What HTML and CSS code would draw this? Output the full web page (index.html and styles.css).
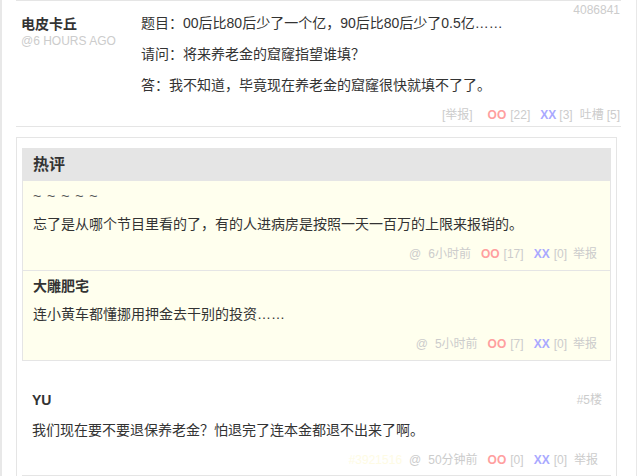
FILE: index.html
```html
<!DOCTYPE html>
<html lang="zh-CN">
<head>
<meta charset="utf-8">
<title>评论</title>
<link rel="stylesheet" href="styles.css">
</head>
<body>
<div class="page">
  <div class="main-comment">
    <span class="cid">4086841</span>
    <div class="author">
      <strong class="name">电皮卡丘</strong>
      <small class="ago">@6 HOURS AGO</small>
    </div>
    <div class="body">
      <p>题目：00后比80后少了一个亿，90后比80后少了0.5亿……</p>
      <p>请问：将来养老金的窟窿指望谁填？</p>
      <p>答：我不知道，毕竟现在养老金的窟窿很快就填不了了。</p>
      <div class="vote main-vote">
        <span>[举报]</span><span class="oo g15">OO</span><span class="g4">[22]</span><span class="xx g10">XX</span><span class="g3">[3]</span><span class="g7">吐槽</span><span class="g3">[5]</span>
      </div>
    </div>
  </div>

  <div class="comments">
    <div class="hot-title">热评</div>
    <ul class="hot-list">
      <li class="item">
        <div class="item-name tilde">~ ~ ~ ~ ~</div>
        <p class="item-text">忘了是从哪个节目里看的了，有的人进病房是按照一天一百万的上限来报销的。</p>
        <div class="vote">
          <span>@</span><span class="g7">6小时前</span><span class="oo g10">OO</span><span class="g4">[17]</span><span class="xx g10">XX</span><span class="g4">[0]</span><span class="g6">举报</span>
        </div>
      </li>
      <li class="item">
        <div class="item-name">大雕肥宅</div>
        <p class="item-text">连小黄车都懂挪用押金去干别的投资……</p>
        <div class="vote">
          <span>@</span><span class="g7">5小时前</span><span class="oo g10">OO</span><span class="g4">[7]</span><span class="xx g10">XX</span><span class="g4">[0]</span><span class="g6">举报</span>
        </div>
      </li>
    </ul>

    <ul class="normal-list">
      <li class="item normal">
        <div class="item-head">
          <span class="item-name">YU</span>
          <span class="floor">#5楼</span>
        </div>
        <p class="item-text">我们现在要不要退保养老金？怕退完了连本金都退不出来了啊。</p>
        <div class="vote">
          <span class="hid">#3921516</span><span class="g7">@</span><span class="g7">50分钟前</span><span class="oo g10">OO</span><span class="g4">[0]</span><span class="xx g10">XX</span><span class="g4">[0]</span><span class="g7">举报</span>
        </div>
      </li>
    </ul>
  </div>
</div>
</body>
</html>
```

FILE: styles.css
```css
html, body {
  margin: 0;
  padding: 0;
  overflow: hidden;
  background: #fff;
}

body {
  font-family: "Liberation Sans", "Noto Sans CJK SC", sans-serif;
  font-size: 14px;
  color: #333;
}

.page {
  box-sizing: border-box;
  width: 637px;
  min-height: 476px;
  border-left: 2px solid #e8e8e8;
  border-right: 1px solid #e8e8e8;
  padding-left: 14px;
}

/* main comment */
.main-comment {
  position: relative;
  display: flex;
  width: 605px;
  box-sizing: border-box;
  border-top: 1px solid #e5e5e5;
  border-bottom: 1px solid #e5e5e5;
  padding: 12px 0 3px 0;
}

.cid {
  position: absolute;
  top: 1px;
  right: 1px;
  font-size: 12px;
  line-height: 16px;
  color: #ccc;
}

.author {
  width: 120px;
  padding: 2px 0 0 5px;
  display: flex;
  flex-direction: column;
}

.name {
  font-size: 14px;
  line-height: 18px;
  font-weight: bold;
  color: #333;
}

.ago {
  font-size: 12px;
  line-height: 16px;
  color: #ccc;
}

.body {
  flex: 1;
}

.body p {
  margin: 0 0 11px 0;
  line-height: 20px;
}

.body p:last-of-type {
  margin-bottom: 0;
}

.vote {
  display: flex;
  justify-content: flex-end;
  font-size: 12px;
  line-height: 20px;
  color: #ccc;
  white-space: nowrap;
}

.main-vote {
  margin-top: 12px;
  line-height: 16px;
  padding-right: 1px;
}

.oo {
  color: #ff9f9f;
  font-weight: bold;
}

.xx {
  color: #a9a9ff;
  font-weight: bold;
}

.hid {
  color: #fefbe4;
}

.g3 { margin-left: 3px; }
.g4 { margin-left: 4px; }
.g6 { margin-left: 6px; }
.g7 { margin-left: 7px; }
.g10 { margin-left: 10px; }
.g15 { margin-left: 15px; }

/* comments box */
.comments {
  box-sizing: border-box;
  width: 601px;
  margin-top: 10px;
  border: 1px solid #e5e5e5;
  padding: 10px 5px 40px 5px;
}

.hot-title {
  height: 33px;
  line-height: 33px;
  background: #e5e5e5;
  padding-left: 11px;
  font-size: 16px;
  font-weight: bold;
  color: #333;
}

.hot-list,
.normal-list {
  list-style: none;
  margin: 0;
  padding: 0;
}

.hot-list {
  background: #ffffee;
  border: 1px solid #e5e5e5;
  border-top: none;
}

.item {
  padding: 5px 13px 6px 10px;
  border-bottom: 1px solid #e5e5e5;
}

.hot-list .item:last-child {
  border-bottom: none;
}

.item-name {
  display: block;
  font-size: 14px;
  line-height: 20px;
  font-weight: bold;
  color: #333;
}

.tilde {
  font-weight: normal;
  letter-spacing: 1px;
  color: #555;
}

.item-text {
  margin: 8px 0 0 0;
  line-height: 20px;
}

.item .vote {
  margin-top: 10px;
}

.normal-list {
  margin-top: 24px;
}

.item.normal {
  padding: 5px 13px 5px 10px;
}

.item.normal .item-text {
  margin-top: 10px;
}

.item-head {
  display: flex;
  justify-content: space-between;
  align-items: center;
}

.floor {
  font-size: 12px;
  line-height: 20px;
  color: #ccc;
  margin-right: -4px;
}
```
